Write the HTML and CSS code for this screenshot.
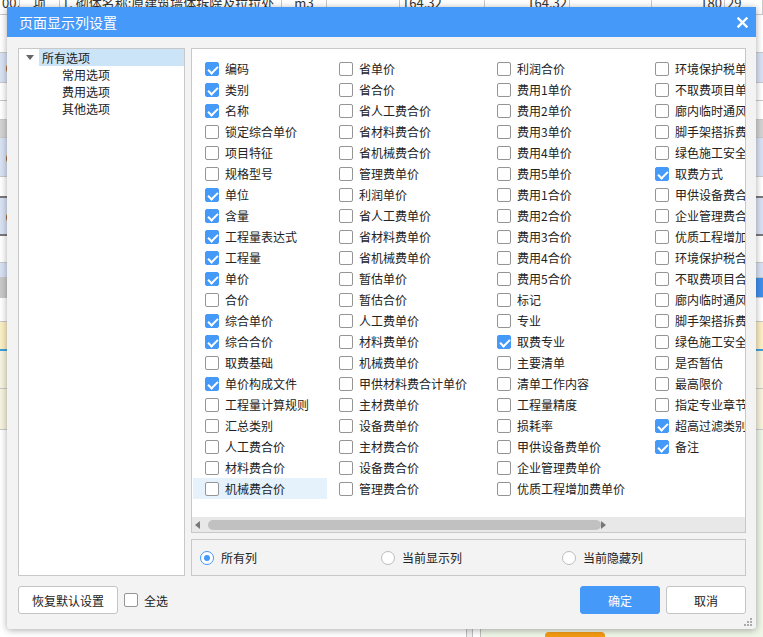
FILE: index.html
```html
<!DOCTYPE html>
<html lang="zh-CN">
<head>
    <meta charset="UTF-8">
    <meta name="viewport" content="width=device-width, initial-scale=1.0">
    <title>页面显示列设置</title>
    <link rel="stylesheet" href="styles.css">
</head>
<body>
    <!-- spreadsheet behind the dialog -->
    <div class="backdrop">
        <div class="head-row">
            <span class="num">002</span><span class="ctr">项</span><span>1. 砌体名称:原建筑墙体拆除及拉拉处</span><span class="ctr">m3</span><span></span><span>164.32</span><span class="num">164.32</span><span></span><span class="num">180</span><span>29</span>
        </div>
        <div class="brow r1"><span class="a">1</span><span></span><span class="z">29</span></div>
        <div class="brow r2"><span class="a">00</span><span></span><span class="z"></span></div>
        <div class="brow r3"><span class="a">2</span><span></span><span class="z"></span></div>
        <div class="brow r4"><span class="a"></span><span></span><span class="z"></span></div>
        <div class="brow r5"><span class="a"></span><span></span><span class="z">68</span></div>
        <div class="brow r6"><span class="a">00</span><span></span><span class="z">24</span></div>
        <div class="brow r7"><span class="a"></span><span></span><span class="z">2</span></div>
        <div class="brow r8"><span class="a">00</span><span></span><span class="z">39</span></div>
        <div class="brow r9"><span class="a"></span><span></span><span class="z">39</span></div>
        <div class="brow r10"><span class="a"></span><span></span><span class="z"></span></div>
        <div class="brow r11"><span class="a">价</span><span></span><span class="z"></span></div>
        <div class="brow r12"><span class="a">行</span><span></span><span class="z"></span></div>
        <div class="brow r13"><span class="a"></span><span></span><span class="z"></span></div>
        <div class="brow r14"><span class="a">等</span><span></span><span class="z"></span></div>
        <div class="brow r15"><span class="a">等</span><span></span><span class="z"></span></div>
        <div class="bottom-pane">
            <div class="pane-left"></div>
            <div class="splitter"></div>
            <div class="pane-gap"></div>
            <div class="pane-right"><div class="pill"></div></div>
        </div>
    </div>

    <div class="dialog">
        <div class="titlebar">
            <span>页面显示列设置</span>
            <svg class="close" width="11" height="11" viewBox="0 0 11 11"><path d="M1.5 1.5 L9.5 9.5 M9.5 1.5 L1.5 9.5" stroke="#fff" stroke-width="2.4" stroke-linecap="square"/></svg>
        </div>

        <div class="dlg-body">
            <div class="main">
                <div class="tree">
                    <div class="tree-row root"><span class="caret"></span><span class="node sel">所有选项</span></div>
                    <div class="tree-row child">常用选项</div>
                    <div class="tree-row child">费用选项</div>
                    <div class="tree-row child">其他选项</div>
                </div>

                <div class="right">
                    <div class="cols">
                        <div class="grid-area">
                            <div class="grid">
                                <label class="opt"><span class="box on"></span>编码</label>
                                <label class="opt"><span class="box on"></span>类别</label>
                                <label class="opt"><span class="box on"></span>名称</label>
                                <label class="opt"><span class="box"></span>锁定综合单价</label>
                                <label class="opt"><span class="box"></span>项目特征</label>
                                <label class="opt"><span class="box"></span>规格型号</label>
                                <label class="opt"><span class="box on"></span>单位</label>
                                <label class="opt"><span class="box on"></span>含量</label>
                                <label class="opt"><span class="box on"></span>工程量表达式</label>
                                <label class="opt"><span class="box on"></span>工程量</label>
                                <label class="opt"><span class="box on"></span>单价</label>
                                <label class="opt"><span class="box"></span>合价</label>
                                <label class="opt"><span class="box on"></span>综合单价</label>
                                <label class="opt"><span class="box on"></span>综合合价</label>
                                <label class="opt"><span class="box"></span>取费基础</label>
                                <label class="opt"><span class="box on"></span>单价构成文件</label>
                                <label class="opt"><span class="box"></span>工程量计算规则</label>
                                <label class="opt"><span class="box"></span>汇总类别</label>
                                <label class="opt"><span class="box"></span>人工费合价</label>
                                <label class="opt"><span class="box"></span>材料费合价</label>
                                <label class="opt hover"><span class="box"></span>机械费合价</label>

                                <label class="opt"><span class="box"></span>省单价</label>
                                <label class="opt"><span class="box"></span>省合价</label>
                                <label class="opt"><span class="box"></span>省人工费合价</label>
                                <label class="opt"><span class="box"></span>省材料费合价</label>
                                <label class="opt"><span class="box"></span>省机械费合价</label>
                                <label class="opt"><span class="box"></span>管理费单价</label>
                                <label class="opt"><span class="box"></span>利润单价</label>
                                <label class="opt"><span class="box"></span>省人工费单价</label>
                                <label class="opt"><span class="box"></span>省材料费单价</label>
                                <label class="opt"><span class="box"></span>省机械费单价</label>
                                <label class="opt"><span class="box"></span>暂估单价</label>
                                <label class="opt"><span class="box"></span>暂估合价</label>
                                <label class="opt"><span class="box"></span>人工费单价</label>
                                <label class="opt"><span class="box"></span>材料费单价</label>
                                <label class="opt"><span class="box"></span>机械费单价</label>
                                <label class="opt"><span class="box"></span>甲供材料费合计单价</label>
                                <label class="opt"><span class="box"></span>主材费单价</label>
                                <label class="opt"><span class="box"></span>设备费单价</label>
                                <label class="opt"><span class="box"></span>主材费合价</label>
                                <label class="opt"><span class="box"></span>设备费合价</label>
                                <label class="opt"><span class="box"></span>管理费合价</label>

                                <label class="opt"><span class="box"></span>利润合价</label>
                                <label class="opt"><span class="box"></span>费用1单价</label>
                                <label class="opt"><span class="box"></span>费用2单价</label>
                                <label class="opt"><span class="box"></span>费用3单价</label>
                                <label class="opt"><span class="box"></span>费用4单价</label>
                                <label class="opt"><span class="box"></span>费用5单价</label>
                                <label class="opt"><span class="box"></span>费用1合价</label>
                                <label class="opt"><span class="box"></span>费用2合价</label>
                                <label class="opt"><span class="box"></span>费用3合价</label>
                                <label class="opt"><span class="box"></span>费用4合价</label>
                                <label class="opt"><span class="box"></span>费用5合价</label>
                                <label class="opt"><span class="box"></span>标记</label>
                                <label class="opt"><span class="box"></span>专业</label>
                                <label class="opt"><span class="box on"></span>取费专业</label>
                                <label class="opt"><span class="box"></span>主要清单</label>
                                <label class="opt"><span class="box"></span>清单工作内容</label>
                                <label class="opt"><span class="box"></span>工程量精度</label>
                                <label class="opt"><span class="box"></span>损耗率</label>
                                <label class="opt"><span class="box"></span>甲供设备费单价</label>
                                <label class="opt"><span class="box"></span>企业管理费单价</label>
                                <label class="opt"><span class="box"></span>优质工程增加费单价</label>

                                <label class="opt"><span class="box"></span>环境保护税单价</label>
                                <label class="opt"><span class="box"></span>不取费项目单价</label>
                                <label class="opt"><span class="box"></span>廊内临时通风费单价</label>
                                <label class="opt"><span class="box"></span>脚手架搭拆费单价</label>
                                <label class="opt"><span class="box"></span>绿色施工安全费单价</label>
                                <label class="opt"><span class="box on"></span>取费方式</label>
                                <label class="opt"><span class="box"></span>甲供设备费合价</label>
                                <label class="opt"><span class="box"></span>企业管理费合价</label>
                                <label class="opt"><span class="box"></span>优质工程增加费合价</label>
                                <label class="opt"><span class="box"></span>环境保护税合价</label>
                                <label class="opt"><span class="box"></span>不取费项目合价</label>
                                <label class="opt"><span class="box"></span>廊内临时通风费合价</label>
                                <label class="opt"><span class="box"></span>脚手架搭拆费合价</label>
                                <label class="opt"><span class="box"></span>绿色施工安全费合价</label>
                                <label class="opt"><span class="box"></span>是否暂估</label>
                                <label class="opt"><span class="box"></span>最高限价</label>
                                <label class="opt"><span class="box"></span>指定专业章节</label>
                                <label class="opt"><span class="box on"></span>超高过滤类别</label>
                                <label class="opt"><span class="box on"></span>备注</label>
                            </div>
                        </div>
                        <div class="hscroll">
                            <span class="arrow left"></span>
                            <span class="thumb"></span>
                            <span class="arrow right"></span>
                        </div>
                    </div>

                    <div class="radios">
                        <label class="radio"><span class="dot on"></span>所有列</label>
                        <label class="radio"><span class="dot"></span>当前显示列</label>
                        <label class="radio"><span class="dot"></span>当前隐藏列</label>
                    </div>
                </div>
            </div>

            <div class="footer">
                <button class="btn">恢复默认设置</button>
                <label class="select-all"><span class="box"></span>全选</label>
                <button class="btn primary">确定</button>
                <button class="btn">取消</button>
            </div>
        </div>

        <svg class="grip" width="8" height="8" viewBox="0 0 8 8">
            <rect x="6" y="0" width="2" height="2" fill="#aaa"/>
            <rect x="3" y="3" width="2" height="2" fill="#aaa"/>
            <rect x="6" y="3" width="2" height="2" fill="#aaa"/>
            <rect x="0" y="6" width="2" height="2" fill="#aaa"/>
            <rect x="3" y="6" width="2" height="2" fill="#aaa"/>
            <rect x="6" y="6" width="2" height="2" fill="#aaa"/>
        </svg>
    </div>
</body>
</html>
```

FILE: styles.css
```css
*{
    box-sizing: border-box;
}
body{
    margin: 0;
    width: 763px;
    height: 637px;
    overflow: hidden;
    position: relative;
    background: #fff;
    font-family: "Noto Sans CJK SC", sans-serif;
    font-size: 12px;
    color: #222;
}

/* backdrop sheet */
.backdrop{
    display: flex;
    flex-direction: column;
    height: 637px;
    overflow: hidden;
    font-family: "Liberation Sans", "Noto Sans CJK SC", sans-serif;
    font-size: 12px;
    color: #333;
}
.head-row{
    flex: none;
    margin-top: -8px;
    height: 23px;
    display: grid;
    grid-template-columns: 20px 40px 222px 45px 73px 85px 85px 82px 73px 1fr;
    border-bottom: 1px solid #c9c9c9;
    font-family: "Noto Sans CJK SC", sans-serif;
    font-size: 13px;
    line-height: 22px;
}
.head-row span{
    border-right: 1px solid #c9c9c9;
    white-space: nowrap;
    overflow: hidden;
    padding: 0 2px;
}
.head-row .num{ text-align: right; }
.head-row .ctr{ text-align: center; }

.brow{
    flex: none;
    display: grid;
    grid-template-columns: 20px 1fr 38px;
    border-bottom: 1px solid #c9c9c9;
    align-items: end;
    font-family: "Noto Sans CJK SC", sans-serif;
}
.brow .a{
    overflow: hidden;
    white-space: nowrap;
    border-right: 1px solid #c9c9c9;
    height: 100%;
    display: flex;
    align-items: center;
    justify-content: flex-end;
}
.brow .z{
    padding-left: 2px;
    height: 100%;
    display: flex;
    align-items: center;
    border-left: 1px solid #c9c9c9;
}
.r1{ height: 38px; }
.r2{ height: 30px; background: #d8e2f3; }
.r3{ height: 18px; }
.r4{ height: 19px; }
.r5{ height: 18px; background: #d3d3d3; }
.r6{ height: 39px; background: #d8e2f3; }
.r7{ height: 21px; border-bottom: 2px solid #7a7a7a; }
.r8{ height: 38px; background: #d8e2f3; border-bottom: 2px solid #7a7a7a; }
.r9{ height: 27px; }
.r10{ height: 15px; background: #d8e2f3; }
.r11{ height: 20px; background: #c9c9c9; }
.r11 .z{ background: #3f8fec; }
.r12{ height: 24px; }
.r13{ height: 29px; background: #fbefc6; border-bottom: 2px solid #3fa0d8; }
.r14{ height: 38px; background: #f6f3de; }
.r15{ height: 41px; background: #f6f3de; }
.bottom-pane{
    flex: 1;
    display: flex;
}
.pane-left{
    width: 467px;
    border-right: 1px solid #bdbdbd;
}
.splitter{
    width: 6px;
    background: #f0f0f0;
    border-right: 1px solid #bdbdbd;
}
.pane-gap{
    width: 8px;
    border-right: 1px solid #bdbdbd;
}
.pane-right{
    flex: 1;
    background: #eef6e8;
    display: flex;
    align-items: flex-end;
    padding-left: 64px;
}
.pill{
    width: 60px;
    height: 6px;
    margin-bottom: -1px;
    background: #f39a12;
    border-radius: 4px 4px 0 0;
}

/* dialog */
.dialog{
    position: absolute;
    left: 7px;
    top: 7px;
    width: 749px;
    height: 622px;
    background: #f3f3f3;
    border-radius: 0 0 3px 3px;
    box-shadow: 0 1px 7px rgba(0,0,0,.35);
    display: flex;
    flex-direction: column;
}
.titlebar{
    height: 30px;
    flex: none;
    background: #4599f8;
    color: #fff;
    font-size: 14px;
    display: flex;
    align-items: center;
    justify-content: space-between;
    padding: 0 8px 0 12px;
}
.dlg-body{
    flex: 1;
    display: flex;
    flex-direction: column;
    gap: 10px;
    padding: 11px 10px 15px 11px;
}
.main{
    display: flex;
    gap: 6px;
    height: 528px;
}

.tree{
    flex: none;
    width: 167px;
    background: #fff;
    border: 1px solid #c8c8c8;
}
.tree-row{
    height: 17px;
    line-height: 17px;
    display: flex;
    align-items: center;
    white-space: nowrap;
}
.caret{
    width: 20px;
    height: 17px;
    position: relative;
}
.caret::after{
    content: "";
    position: absolute;
    left: 7px;
    top: 6px;
    border-top: 5px solid #666;
    border-left: 4px solid transparent;
    border-right: 4px solid transparent;
}
.node.sel{
    flex: 1;
    background: #cce4f7;
    padding-left: 3px;
}
.tree-row.child{
    padding-left: 43px;
}

.right{
    flex: 1;
    min-width: 0;
    display: flex;
    flex-direction: column;
    gap: 6px;
}
.cols{
    height: 485px;
    background: #fff;
    border: 1px solid #c8c8c8;
    display: flex;
    flex-direction: column;
    overflow: hidden;
}
.grid-area{
    flex: 1;
    overflow: hidden;
    padding: 9px 0 0 1px;
}
.grid{
    display: grid;
    width: max-content;
    grid-template-columns: 134px 158px 158px 158px;
    grid-template-rows: repeat(21, 21px);
    grid-auto-flow: column;
}
.opt{
    display: flex;
    align-items: center;
    gap: 6px;
    padding-left: 12px;
    white-space: nowrap;
    overflow: hidden;
}
.opt.hover{
    background: #e5f1fb;
}
.box{
    flex: none;
    width: 14px;
    height: 14px;
    border: 1px solid #959595;
    border-radius: 2px;
    background: #fff;
    position: relative;
}
.box.on{
    background: #4599f8;
    border-color: #4599f8;
}
.box.on::after{
    content: "";
    position: absolute;
    left: 4px;
    top: 1px;
    width: 4px;
    height: 8px;
    border: solid #fff;
    border-width: 0 2px 2px 0;
    transform: rotate(45deg);
}

.hscroll{
    height: 15px;
    flex: none;
    background: #e8e8e8;
    display: flex;
    align-items: center;
    padding: 0 3px;
}
.arrow{
    width: 0;
    height: 0;
    border-top: 4px solid transparent;
    border-bottom: 4px solid transparent;
}
.arrow.left{
    border-right: 5px solid #777;
}
.arrow.right{
    border-left: 5px solid #777;
    margin-left: auto;
}
.thumb{
    margin-left: 8px;
    width: 393px;
    height: 10px;
    border-radius: 5px;
    background: #c1c1c1;
}

.radios{
    height: 37px;
    border: 1px solid #c8c8c8;
    display: grid;
    grid-template-columns: 181px 181px 1fr;
    align-items: center;
    padding-left: 8px;
}
.radio{
    display: flex;
    align-items: center;
    gap: 7px;
}
.dot{
    width: 14px;
    height: 14px;
    border-radius: 50%;
    border: 1px solid #bdbdbd;
    background: #fff;
    display: flex;
    align-items: center;
    justify-content: center;
}
.dot.on{
    border-color: #4599f8;
}
.dot.on::after{
    content: "";
    width: 6px;
    height: 6px;
    border-radius: 50%;
    background: #4599f8;
}

.footer{
    height: 28px;
    display: flex;
    align-items: center;
    gap: 6px;
}
.btn{
    height: 28px;
    width: 80px;
    border: 1px solid #c4c4c4;
    border-radius: 3px;
    background: #fff;
    font-family: "Noto Sans CJK SC", sans-serif;
    font-size: 12px;
    color: #222;
    padding: 0;
}
.btn:first-child{
    width: 100px;
}
.btn.primary{
    margin-left: auto;
    background: #4599f8;
    border-color: #4599f8;
    color: #fff;
}
.select-all{
    display: flex;
    align-items: center;
    gap: 6px;
}
.grip{
    position: absolute;
    right: 4px;
    bottom: 3px;
}
```
